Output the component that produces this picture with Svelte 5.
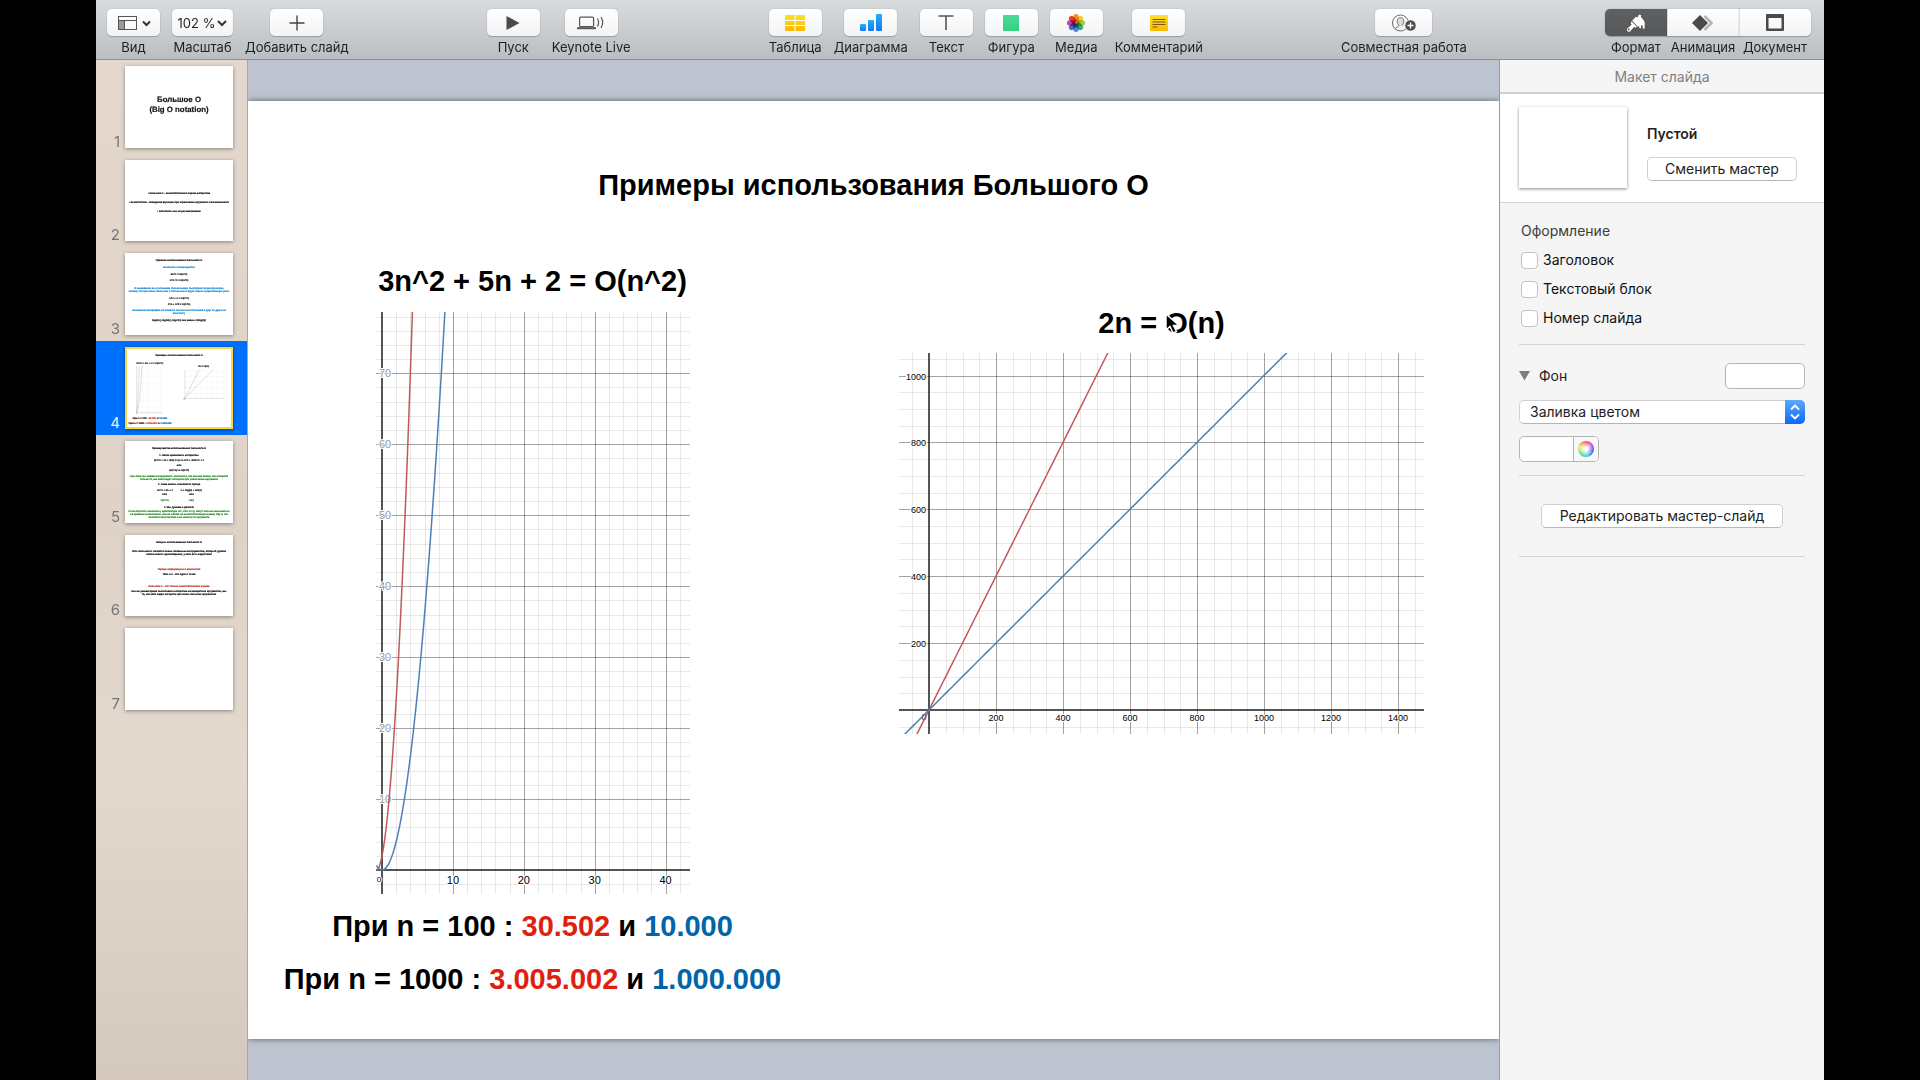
<script>
  const quad = {
    w: 314, h: 582, ox: 6, oy: 558, px: 7.09, py: 7.096, minor: 2, major: 10,
    xs: [10, 20, 30, 40], ys: [10, 20, 30, 40, 50, 60, 70],
    curves: [
      { color: '#c05a5a', f: (x) => 3 * x * x + 5 * x + 2, from: -0.8, to: 4.4 },
      { color: '#4d80b8', f: (x) => x * x, from: -0.8, to: 9 }
    ]
  };
  const linear = {
    w: 525, h: 381, ox: 30, oy: 357, px: 0.335, py: 0.3345, minor: 50, major: 200,
    xs: [200, 400, 600, 800, 1000, 1200, 1400], ys: [200, 400, 600, 800, 1000],
    curves: [
      { color: '#c05a5a', f: (x) => 2 * x, from: -80, to: 560 },
      { color: '#4d80b8', f: (x) => x, from: -80, to: 1100 }
    ]
  };

  const X = (p, v) => p.ox + v * p.px;
  const Y = (p, v) => p.oy - v * p.py;

  function ticks(lo, hi, step) {
    const out = [];
    for (let v = Math.ceil(lo / step) * step; v <= hi; v += step) if (v !== 0) out.push(v);
    return out;
  }
  const vTicks = (p, step) => ticks(-p.ox / p.px, (p.w - p.ox) / p.px, step);
  const hTicks = (p, step) => ticks((p.oy - p.h) / p.py, p.oy / p.py, step);
  function grid(p, step) {
    const v = vTicks(p, step).map((t) => `M${Math.round(X(p, t)) + 0.5} 0V${p.h}`);
    const h = hTicks(p, step).map((t) => `M0 ${Math.round(Y(p, t)) + 0.5}H${p.w}`);
    return v.join('') + h.join('');
  }
  function trace(p, c) {
    const pts = [];
    for (let i = 0; i <= 80; i++) {
      const x = c.from + ((c.to - c.from) * i) / 80;
      pts.push(`${X(p, x).toFixed(2)},${Y(p, c.f(x)).toFixed(2)}`);
    }
    return pts.join(' ');
  }

  // Miniature slides are drawn on a 648 x 488 sheet; a line is [text, centre y / 2, colour, size, centre x / 2]
  const B = '#1a8ad6', G = '#2a8a2a', R = '#c03028', K = '#111';
  const slides = [
    { lines: [['Большое О', 99, K, 47], ['(Big O notation)', 129, K, 47]] },
    { lines: [
      ['•  Большое О - асимптотическая оценка алгоритма', 100, K],
      ['•  Асимптотика - поведение функции при стремлении аргумента к бесконечности', 127, K],
      ['•  Константы мы не рассматриваем', 154, K]
    ] },
    { lines: [
      ['Правила использования Большого О', 22, K],
      ['Константы игнорируются', 42, B],
      ['5n^2 = O(n^2)', 62, K], ['n^2 / 3 = O(n^2)', 80, K],
      ['В выражении мы учитываем только самую быстрорастущую функцию,', 105, B],
      ['потому что при очень большом n только она и будет играть существенную роль', 114, B],
      ['n^2 + n = O(n^2)', 134, K], ['2^n + n^9 = O(2^n)', 152, K],
      ['Основание логарифма не пишется так как они отличаются друг от друга на', 171, B],
      ['константу', 181, B],
      ['logA(n), logB(n), logC(n) все равны O(log(n))', 201, K]
    ] },
    { plots: true, lines: [
      ['Примеры использования Большого О', 23, K],
      ['3n^2 + 5n + 2 = O(n^2)', 49, K, 15, 74],
      ['2n = O(n)', 58, K, 15, 235]
    ] },
    { lines: [
      ['Преимущества использования Большого О', 21, K],
      ['1.   Легко сравнивать алгоритмы', 41, K],
      ['(3n^2 + 2n + 600) / 3,5 vs n^3 + 300n^2 + 1', 57, K],
      ['или', 72, K], ['O(n^2) vs O(n^3)', 88, K],
      ['При этом мы можем игнорировать константы, так как нам важно, как алгоритм', 105, G],
      ['только то, как себя ведет алгоритм при увеличении аргумента', 114, G],
      ['2.   Сама запись становится проще', 130, K],
      ['3n^2 + 5n + 2', 146, K, 15, 120], ['n + log(n) + sin(n)', 146, K, 15, 199],
      ['или', 160, K, 15, 119], ['или', 160, K, 15, 199],
      ['O(n^2)', 176, G, 15, 119], ['O(n)', 176, G, 15, 199],
      ['3.   Мы думаем о деталях', 198, K],
      ['Если опустить константы, архитектура ОС, CPU и т.д. могут сильно сказываться', 208, G],
      ['на времени выполнения, она не влияет на асимптотическую оценку Big O, так', 217, G],
      ['является константами и не зависит от аргумента', 226, G]
    ] },
    { lines: [
      ['Минусы использования Большого О', 22, K],
      ['Хоть большое О является очень полезным инструментом, который удобно', 49, K],
      ['использовать единообразно, у него есть недостатки', 57, K],
      ['Теряем информацию о константах', 102, R], ['100n и n - это одно и то же', 116, K],
      ['Большое О - это только асимптотическая оценка', 154, R],
      ['Мы не узнаем время выполнения алгоритма на конкретных аргументах, мы', 169, K],
      ['то, как себя ведет алгоритм при очень больших аргументах', 178, K]
    ] },
    { lines: [] }
  ];
  const current = 3;

  const groups = [
    [['view', 'Вид'], ['zoom', 'Масштаб'], ['add', 'Добавить слайд']],
    [['play', 'Пуск'], ['live', 'Keynote Live']],
    [['table', 'Таблица'], ['chart', 'Диаграмма'], ['text', 'Текст'], ['shape', 'Фигура'], ['media', 'Медиа'], ['comment', 'Комментарий']],
    [['collab', 'Совместная работа']]
  ];
  const modes = [['format', 'Формат'], ['animate', 'Анимация'], ['document', 'Документ']];
  const petals = ['#f7941d', '#f5d327', '#a5cf4c', '#3fae7a', '#4a90e2', '#6b5fc7', '#b24fb8', '#e8443a'];
  const checks = ['Заголовок', 'Текстовый блок', 'Номер слайда'];
</script>

{#snippet plot(p)}
  <path d={grid(p, p.minor)} class="minor" />
  <path d={grid(p, p.major)} class="major" />
  <path d="M{p.ox} 0V{p.h}M0 {p.oy}H{p.w}" class="axis" />
{/snippet}

{#snippet traces(p)}
  {#each p.curves as c}<polyline points={trace(p, c)} stroke={c.color} class="trace" />{/each}
{/snippet}

{#snippet icon(name)}
  {#if name === 'view'}
    <svg width="34" height="18" viewBox="0 0 34 18" fill="none" stroke="#555">
      <rect x="1.5" y="2.5" width="18" height="13" /><path d="M2 6.5h17M7.5 6.5v9" /><path d="M2 7h5v8H2z" fill="#999" stroke="none" />
      <path d="M26 7.5l3.5 3.5L33 7.500" stroke="#333" stroke-width="2" />
    </svg>
  {:else if name === 'zoom'}
    <span>102 %</span>
    <svg width="10" height="8" viewBox="0 0 10 8" fill="none" stroke="#333" stroke-width="2"><path d="M1 2l4 4 4-4" /></svg>
  {:else if name === 'add'}
    <svg width="16" height="16" viewBox="0 0 16 16" stroke="#444" stroke-width="1.4"><path d="M8 .5v15M.5 8h15" /></svg>
  {:else if name === 'play'}
    <svg width="14" height="14" viewBox="0 0 14 14"><path d="M.5 0l13 7-13 7z" fill="#4a4a4c" /></svg>
  {:else if name === 'live'}
    <svg width="28" height="14" viewBox="0 0 28 14" fill="none" stroke="#555" stroke-width="1.2">
      <rect x="2.6" y="1.1" width="14" height="9.5" rx="1.2" /><path d="M0 12.2h19" stroke-width="2" />
      <path d="M20.5 2.5q2.2 4 0 8M24 1q3.4 5.500 0 11" />
    </svg>
  {:else if name === 'table'}
    <svg width="20" height="16" viewBox="0 0 20 16">
      <defs><linearGradient id="gold" x1="0" y1="0" x2="0" y2="1"><stop offset="0" stop-color="#fde02a" /><stop offset="1" stop-color="#fbb700" /></linearGradient></defs>
      <rect width="20" height="16" rx="1" fill="url(#gold)" /><path d="M10 0v16M0 5.500h20M0 10.500h20" stroke="#fff" stroke-width="1" />
    </svg>
  {:else if name === 'chart'}
    <svg width="22" height="17" viewBox="0 0 22 17">
      <defs><linearGradient id="azure" x1="0" y1="0" x2="0" y2="1"><stop offset="0" stop-color="#25b0f8" /><stop offset="1" stop-color="#1579f2" /></linearGradient></defs>
      <g fill="url(#azure)"><rect y="10" width="6" height="7" rx="1" /><rect x="8" y="6" width="6" height="11" rx="1" /><rect x="16" width="6" height="17" rx="1" /></g>
    </svg>
  {:else if name === 'text'}
    <svg width="16" height="15" viewBox="0 0 16 15" fill="none" stroke="#555" stroke-width="1.600"><path d="M.5 1h15M8 1v14" /></svg>
  {:else if name === 'shape'}
    <svg width="16" height="16" viewBox="0 0 16 16">
      <defs><linearGradient id="mint" x1="0" y1="0" x2="0" y2="1"><stop offset="0" stop-color="#4fd69e" /><stop offset="1" stop-color="#33d27c" /></linearGradient></defs>
      <rect width="16" height="16" fill="url(#mint)" />
    </svg>
  {:else if name === 'media'}
    <svg class="flower" width="20" height="20" viewBox="-10 -10 20 20">
      {#each petals as c, i}<rect x="-2.700" y="-9" width="5.400" height="8.500" rx="2.700" fill={c} transform="rotate({i * 45})" />{/each}
    </svg>
  {:else if name === 'comment'}
    <svg width="18" height="16" viewBox="0 0 18 16">
      <rect width="18" height="16" rx="1" fill="url(#gold)" /><path d="M2.500 4.500h13M2.500 7h13M2.500 9.500h13M2.500 12h5" stroke="#7a5a10" stroke-width="1" />
    </svg>
  {:else if name === 'collab'}
    <svg width="26" height="18" viewBox="0 0 26 18">
      <circle cx="9.500" cy="9" r="8" fill="none" stroke="#666" />
      <path d="M4.500 14.500c.5-1.600 3-1.500 3.200-2.800.1-1-1.500-2-1.500-4.500 0-2.200 1.300-3.500 3.300-3.500s3.300 1.300 3.300 3.500c0 2.500-1.600 3.500-1.500 4.500" fill="#ddd" stroke="#777" />
      <circle cx="19.500" cy="11.500" r="5.700" fill="#4a4a4c" stroke="#fff" /><path d="M19.500 8.500v6M16.500 11.500h6" stroke="#fff" stroke-width="1.400" />
    </svg>
  {:else if name === 'format'}
    <svg width="20" height="18" viewBox="0 0 20 18">
      <path d="M6.200 6.500L10 2.800l1.500.8L13 .5l2.300.8-.5 1.500 3.400 4.200c.8 2 .5 4.600.5 6.800-.2 1.500-1.800 1.500-1.900 0l-.3-2.600-1.500.4v2.200c-.3 1-1.400.9-1.600 0l-.2-1.500-1.800.4z" fill="#fff" />
      <path d="M5.600 7.300l5.500 5.500-1.500.8-1.600-.6-3.800 4.300c-1.800 1.600-4.400-.7-2.900-2.700l4.300-3.800-.8-1.700z" fill="#fff" /><path d="M5.800 7l5.700 5.600" stroke="#57585a" stroke-width=".8" /><circle cx="2.800" cy="15.500" r=".9" fill="#57585a" />
    </svg>
  {:else if name === 'animate'}
    <svg width="22" height="16" viewBox="0 0 22 16"><path d="M12.500 1l7 7-7 7" fill="none" stroke="#b5b5b5" stroke-width="2.600" /><path d="M8 0l8 8-8 8-8-8z" fill="#4a4a4c" /></svg>
  {:else}
    <svg width="18" height="17" viewBox="0 0 18 17"><path fill-rule="evenodd" d="M1 0h16a1 1 0 011 1v15a1 1 0 01-1 1H1a1 1 0 01-1-1V1a1 1 0 011-1zm1.500 4v10.500h13V4z" fill="#4a4a4c" /></svg>
  {/if}
{/snippet}

<div class="screen">
  <header class="toolbar">
    {#each groups as group}
      <div class="group">
        {#each group as [id, label]}
          <button class="tool {id}"><span class="face">{@render icon(id)}</span><span class="label">{label}</span></button>
        {/each}
      </div>
    {/each}
    <div class="modes">
      {#each modes as [id, label]}
        <button class="tool {id}"><span class="face">{@render icon(id)}</span><span class="label">{label}</span></button>
      {/each}
    </div>
  </header>

  <div class="work">
    <nav class="navigator" aria-label="Слайды">
      <ol>
        {#each slides as s, i}
          <li class:current={i === current}>
            <span class="num">{i + 1}</span>
            <svg class="mini" viewBox="0 0 648 488" preserveAspectRatio="none">
              {#if s.plots}
                <svg x="66" y="112" width="160" height="292" viewBox="0 0 314 582" class="faint">{@render plot(quad)}{@render traces(quad)}</svg>
                <svg x="340" y="134" width="264" height="184" viewBox="0 0 525 381" class="faint">{@render plot(linear)}{@render traces(linear)}</svg>
                <text x="148" y="428" font-size="15" stroke="#111">При n = 100 : <tspan fill="#df1f10" stroke="#df1f10">30.502</tspan> и <tspan fill="#0065ab" stroke="#0065ab">10.000</tspan></text>
                <text x="150" y="457" font-size="15" stroke="#111">При n = 1000 : <tspan fill="#df1f10" stroke="#df1f10">3.005.002</tspan> и <tspan fill="#0065ab" stroke="#0065ab">1.000.000</tspan></text>
              {/if}
              {#each s.lines as [t, y, c, size = 15, x = 162]}
                <text x={x * 2} y={y * 2 + size * 0.35} fill={c} stroke={c} font-size={size}>{t}</text>
              {/each}
            </svg>
          </li>
        {/each}
      </ol>
    </nav>

    <main class="canvas">
      <article class="slide">
        <h1>Примеры использования Большого О</h1>
        <div class="columns">
          <section class="left">
            <h2>3n^2 + 5n + 2 = O(n^2)</h2>
            <svg class="plot quad" viewBox="0 0 {quad.w} {quad.h}">
              {@render plot(quad)}
              {#each quad.ys as v}<text class="soft" x="9" y={Y(quad, v) + 4} font-size="11">{v}</text>{/each}
              {#each quad.xs as v}<text x={X(quad, v)} y={quad.oy + 14} font-size="11">{v}</text>{/each}
              <text x="3" y={quad.oy + 12} font-size="8">0</text>
              {@render traces(quad)}
            </svg>
            <p>При n = 100 : <span class="red">30.502</span> и <span class="blue">10.000</span></p>
            <p>При n = 1000 : <span class="red">3.005.002</span> и <span class="blue">1.000.000</span></p>
          </section>
          <section class="right">
            <h2>2n = <span class="pointed">O<svg class="cursor" width="15" height="22" viewBox="0 0 15 22"><path d="M1 1v16l4-3.500L8 20l3.500-1.500-3-6H14z" fill="#000" stroke="#fff" stroke-width="1.500" /></svg></span>(n)</h2>
            <svg class="plot linear" viewBox="0 0 {linear.w} {linear.h}">
              {@render plot(linear)}
              {#each linear.ys as v}<text class="end" x="27" y={Y(linear, v) + 4} font-size="9">{v}</text>{/each}
              {#each linear.xs as v}<text x={X(linear, v)} y={linear.oy + 11} font-size="9">{v}</text>{/each}
              <text x="25" y={linear.oy + 10} font-size="9">0</text>
              {@render traces(linear)}
            </svg>
          </section>
        </div>
      </article>
    </main>

    <aside class="inspector">
      <h3>Макет слайда</h3>
      <div class="master">
        <div class="preview"></div>
        <div class="info"><strong>Пустой</strong><button class="push">Сменить мастер</button></div>
      </div>
      <fieldset>
        <legend>Оформление</legend>
        {#each checks as c}<label><input type="checkbox" />{c}</label>{/each}
      </fieldset>
      <section class="fill">
        <div class="row">
          <button class="disclose"><svg width="11" height="10" viewBox="0 0 11 10"><path d="M0 0h11L5.500 9.500z" fill="#7c7c7c" /></svg>Фон</button>
          <button class="swatch" aria-label="Цвет фона"></button>
        </div>
        <div class="select">
          <select aria-label="Тип заливки"><option>Заливка цветом</option></select>
          <span class="cap"><svg width="10" height="16" viewBox="0 0 10 16" fill="none" stroke="#fff" stroke-width="1.800"><path d="M1 5.500l4-4 4 4M1 10.500l4 4 4-4" /></svg></span>
        </div>
        <div class="well"><button aria-label="Цвет"></button><button aria-label="Палитра"><span class="wheel"></span></button></div>
      </section>
      <div class="edit"><button class="push">Редактировать мастер-слайд</button></div>
    </aside>
  </div>
</div>

<style>
  :global(body) { margin: 0; background: #000; }
  * { box-sizing: border-box; }
  button { font: inherit; color: inherit; border: 0; padding: 0; background: none; }
  .screen { display: flex; flex-direction: column; min-height: 100vh; padding: 0 5%; background: #000; font-family: Inter, "Liberation Sans", sans-serif; color: #222; }

  .toolbar { display: flex; justify-content: space-between; height: 60px; padding: 9px 13px 0 11px; background: linear-gradient(#d9dcdf, #babec1); border-bottom: 1px solid #8d9297; }
  .group { display: flex; gap: 12px; }
  .modes { display: flex; }
  .tool { display: flex; flex-direction: column; align-items: center; gap: 3px; height: 46px; font-size: 13px; line-height: 16px; white-space: nowrap; color: #1d1f21; }
  .face { display: flex; align-items: center; justify-content: center; gap: 2px; width: 53px; height: 27px; border-radius: 5px; background: linear-gradient(#fff, #f3f3f4); box-shadow: 0 1px 1px #0003, 0 0 0 1px #0000000a; }
  .zoom .face { width: 61px; }
  .collab .face { width: 57px; }
  .flower rect { mix-blend-mode: multiply; }
  .modes .face { width: 72px; border-radius: 0; border-left: 1px solid #ddd; }
  .modes .format .face { width: 62px; border: 0; border-radius: 5px 0 0 5px; background: linear-gradient(#5f6062, #57585a); }
  .modes .document .face { border-radius: 0 5px 5px 0; }

  .work { flex: 1; display: grid; grid-template-columns: 152px 1fr 325px; }
  .navigator { background: linear-gradient(#e4d8ce, #dfd3c8 45%, #e4d9ce 70%, #d5c9bf); border-right: 1px solid #a9a6a5; }
  .navigator ol { display: grid; grid-auto-rows: 1fr; height: 656px; margin: 0; padding: 0; list-style: none; }
  .navigator li { display: flex; align-items: stretch; gap: 5px; padding: 6px 14px 6px 0; }
  .navigator li.current { background: #0070fc; color: #fff; }
  .num { flex: 1; align-self: flex-end; text-align: right; font-size: 15px; line-height: 12px; color: #73757b; }
  .current .num { color: #e8f1ff; }
  .mini { width: 108px; height: 100%; background: #fff; box-shadow: 0 1px 4px #0006; }
  .current .mini { outline: 2px solid #f9d843; outline-offset: -2px; }
  .mini text { font-family: "Liberation Sans", sans-serif; font-weight: bold; text-anchor: middle; text-rendering: geometricPrecision; }

  .canvas { display: flex; align-items: center; background: #bdc4cf; }
  .slide { width: 100%; aspect-ratio: 4 / 3; padding-top: 67px; background: #fff; box-shadow: 0 0 6px #0008; clip-path: inset(-8px 0); font-family: "Liberation Sans", Arial, sans-serif; color: #000; }
  .slide h1, .slide h2, .slide p { margin: 0; font-size: 29px; line-height: 34px; font-weight: bold; text-align: center; white-space: nowrap; }
  .columns { display: grid; grid-template-columns: 569fr 682fr; margin-top: 62px; }
  .columns section { display: flex; flex-direction: column; align-items: center; }
  .right { padding: 42px 0 0 7px; }
  .plot { display: block; max-width: 100%; overflow: hidden; }
  .quad { width: 314px; margin: 14px 0 15px; }
  .linear { width: 525px; margin-top: 13px; }
  .slide p + p { margin-top: 19px; }
  .red { color: #df1f10; }
  .blue { color: #0065ab; }
  .pointed { position: relative; }
  .cursor { position: absolute; left: 0; top: 6px; }

  .minor, .major, .axis, .trace { fill: none; }
  .minor { stroke: #00000017; }
  .major { stroke: #0000004d; }
  .axis { stroke: #1c1c1c; stroke-width: 1.500; }
  .trace { stroke-width: 1.500; }
  .faint .axis { stroke: #888; stroke-width: 3; }
  .faint .trace { opacity: .7; stroke-width: 4; }
  .plot text { font-family: "Liberation Sans", Arial, sans-serif; fill: #000; text-anchor: middle; stroke: #fff; stroke-width: 2px; paint-order: stroke; }
  .plot .soft { fill: #999; }
  .plot .end { text-anchor: end; }

  .inspector { background: #f5f5f5; border-left: 1px solid #9b9b9f; font-size: 14px; line-height: 20px; }
  .inspector h3 { margin: 0; height: 34px; border-bottom: 2px solid #cfcfd6; font-size: 14px; line-height: 34px; font-weight: 400; text-align: center; color: #808080; }
  .master { display: flex; gap: 20px; height: 109px; padding: 13px 19px; background: #fff; border-bottom: 1px solid #d2d2d2; }
  .preview { width: 108px; height: 81px; background: #fff; box-shadow: 0 1px 3px #0007; }
  .info { display: flex; flex-direction: column; gap: 13px; padding-top: 17px; }
  .info strong { font-weight: 600; }
  .push { height: 24px; padding: 0 17px; border: 1px solid #d0d0d0; border-bottom-color: #b8b8b8; border-radius: 5px; background: #fff; white-space: nowrap; }
  fieldset { display: flex; flex-direction: column; gap: 9px; margin: 0 19px; padding: 18px 2px 16px; border: 0; border-bottom: 1px solid #d4d4d4; }
  legend { float: left; padding: 0; color: #3c3c3c; }
  fieldset label { display: flex; align-items: center; gap: 5px; color: #111; }
  input { appearance: none; width: 17px; height: 17px; margin: 0; border: 1px solid #c2c2c2; border-radius: 4px; background: #fff; }
  .fill { display: flex; flex-direction: column; gap: 11px; margin: 0 19px; padding: 18px 0 13px; border-bottom: 1px solid #d4d4d4; }
  .row { display: flex; align-items: center; justify-content: space-between; }
  .disclose { display: flex; align-items: center; gap: 9px; }
  .swatch { width: 80px; height: 26px; border: 1px solid #b4b4b4; border-radius: 5px; background: #fff; }
  .select { position: relative; height: 25px; }
  select { appearance: none; width: 100%; height: 24px; padding: 0 10px; border: 1px solid #d0d0d0; border-bottom-color: #b4b4b4; border-radius: 5px; background: #fff; font: inherit; color: #222; }
  .cap { position: absolute; top: 0; right: 0; display: flex; align-items: center; justify-content: center; width: 20px; height: 24px; border-radius: 0 5px 5px 0; background: linear-gradient(#5ca9fb, #0a68fa); pointer-events: none; }
  .well { display: flex; width: 80px; height: 26px; border: 1px solid #b4b4b4; border-radius: 5px; background: #fff; overflow: hidden; }
  .well button:first-child { flex: 1; }
  .well button:last-child { display: flex; align-items: center; justify-content: center; width: 25px; border-left: 1px solid #b4b4b4; background: #f8f8f8; }
  .wheel { width: 16px; height: 16px; border-radius: 50%; background: radial-gradient(#fff 15%, #fff0 75%), conic-gradient(#f33, #a3e 15%, #33e 30%, #2be 45%, #3d6 62%, #de3 80%, #f33); }
  .edit { display: flex; justify-content: center; margin: 0 19px; padding: 28px 0; border-bottom: 1px solid #d4d4d4; }
  .edit .push { padding: 0 18px; }
</style>
